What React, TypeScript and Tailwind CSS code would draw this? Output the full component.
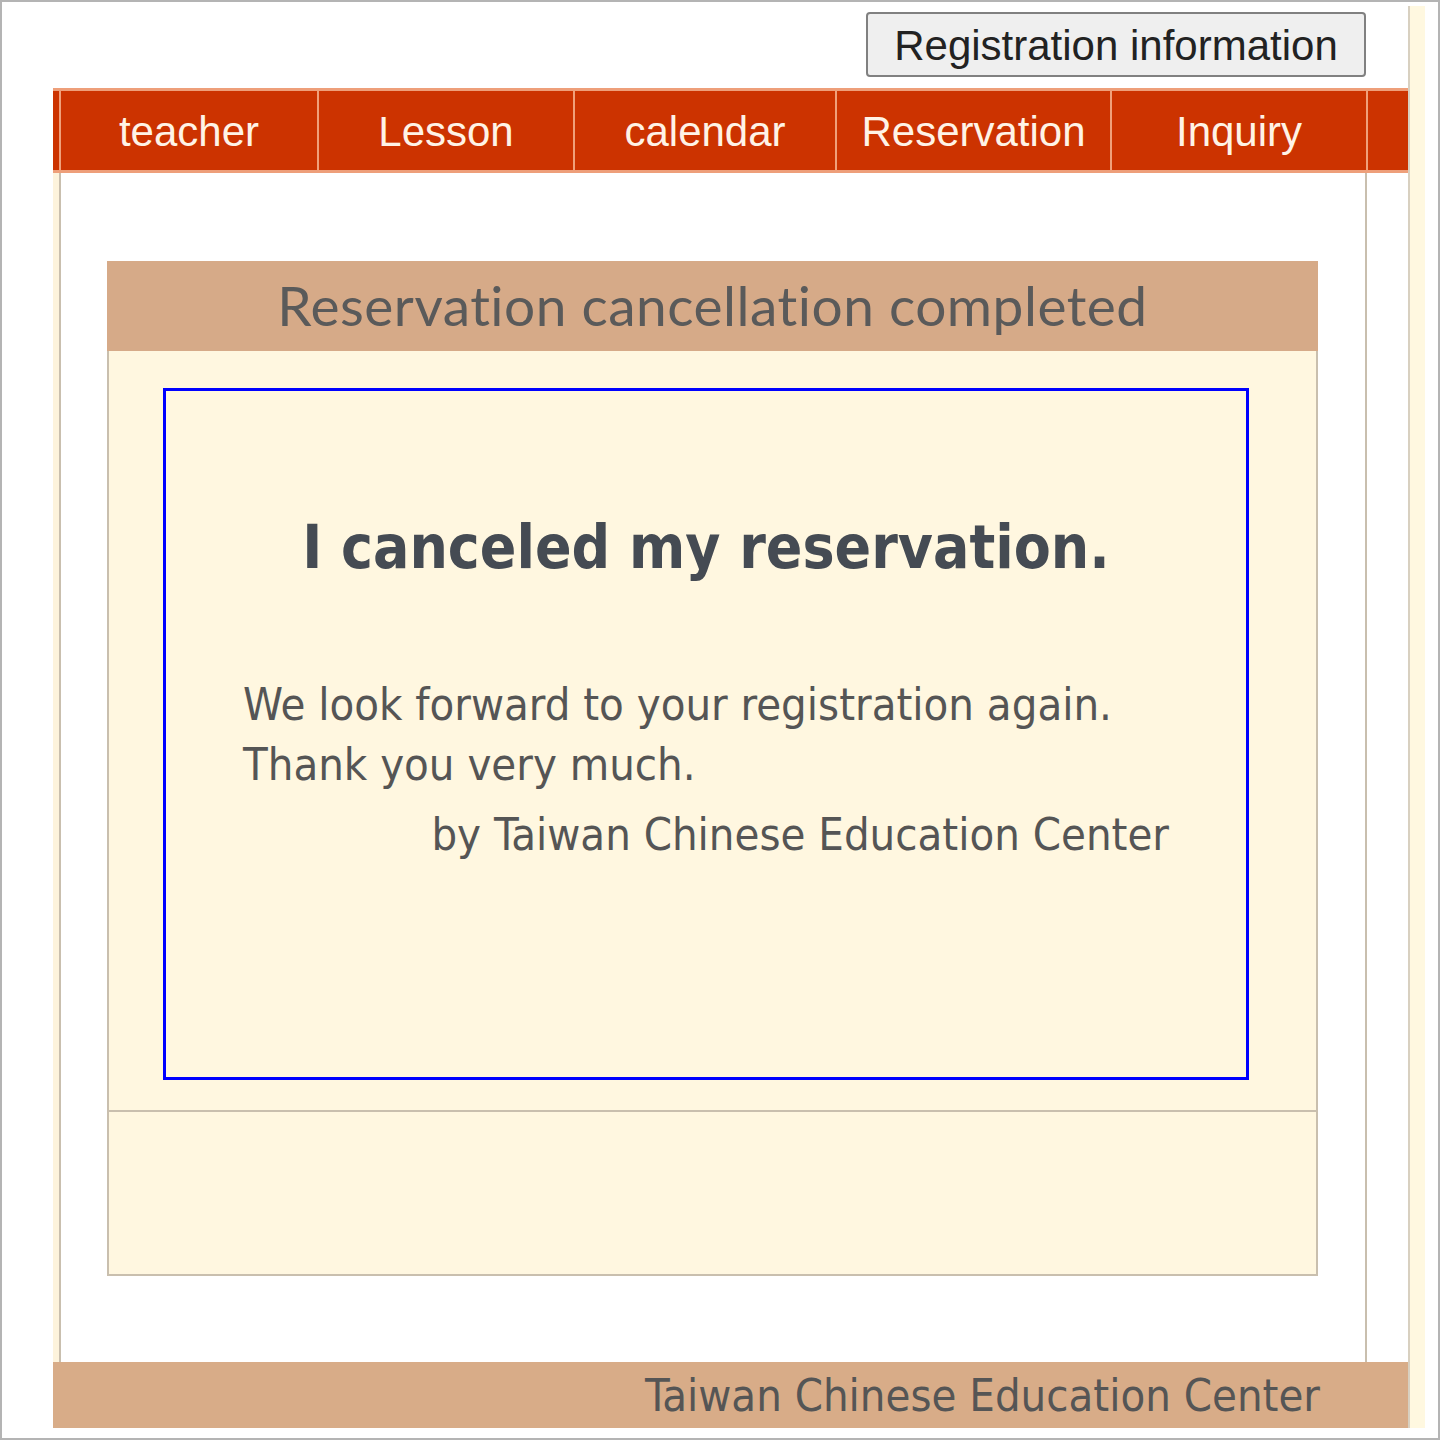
import React from "react";

const navItems = [
  { label: "teacher", w: "w-[258px]" },
  { label: "Lesson", w: "w-[256px]" },
  { label: "calendar", w: "w-[262px]" },
  { label: "Reservation", w: "w-[275px]" },
  { label: "Inquiry", w: "w-[256px]" },
];

export default function App() {
  return (
    <div className="w-[1440px] h-[1440px] box-border border-2 border-[#b4b4b4] bg-white flex overflow-hidden">
      <div className="w-[51px] shrink-0" />
      <div className="w-[1355px] shrink-0 flex flex-col">
        {/* top */}
        <div className="h-[86px] shrink-0 flex justify-end items-start pt-[10px] pr-[42px]">
          <button className="w-[500px] h-[65px] rounded-[4px] border-2 border-[#808080] bg-[#efefef] text-[#222] text-[42px] leading-none font-['Liberation_Sans',Arial,sans-serif] flex items-center justify-center pt-[3px]">
            Registration information
          </button>
        </div>
        {/* nav */}
        <div className="h-[85px] shrink-0 bg-[#cc3300] border-t-[3px] border-b-[3px] border-[#ee9f7a] flex font-['Liberation_Sans',Arial,sans-serif] text-[42px] text-[#fff3e6]">
          <div className="w-[6px] shrink-0" />
          {navItems.map((n) => (
            <div
              key={n.label}
              className={`${n.w} shrink-0 border-l-2 border-[#f0a07a] flex items-center justify-center leading-none pt-[3px]`}
            >
              {n.label}
            </div>
          ))}
          <div className="w-[2px] shrink-0 bg-[#f0a07a]" />
          <div className="flex-1" />
        </div>
        {/* content */}
        <div className="flex-1 flex">
          <div className="w-[6px] shrink-0 bg-[#fdf3dc]" />
          <div className="w-[2px] shrink-0 bg-[#c9bfae]" />
          <div className="w-[1304px] shrink-0 bg-white pt-[88px] pl-[46px]">
            <div className="w-[1211px]">
              <div className="h-[90px] bg-[#d6aa88] flex items-center justify-center text-[55px] text-[#5a5a5a] font-['Lato','Open_Sans',sans-serif] leading-none tracking-[0.5px] pb-[2px]">
                Reservation cancellation completed
              </div>
              <div className="border-x-2 border-b-2 border-[#c9bfae] bg-[#fff7e0]">
                <div className="pt-[37px] pl-[54px]">
                  <div className="w-[1086px] h-[692px] border-[3px] border-[#0000ff] font-['DejaVu_Sans_Condensed','DejaVu_Sans',Tahoma,sans-serif] font-stretch-condensed text-[#50555c]">
                    <div className="pt-[126px] text-center text-[60px] font-bold leading-none text-[#454b53]">
                      I canceled my reservation.
                    </div>
                    <div className="pt-[98px] px-[77px] text-[45px] leading-[60px] text-[#555]">
                      <div>We look forward to your registration again.</div>
                      <div>Thank you very much.</div>
                      <div className="text-right mt-[10px]">by Taiwan Chinese Education Center</div>
                    </div>
                  </div>
                </div>
                <div className="mt-[30px] border-t-2 border-[#c9bfae] h-[164px]" />
              </div>
            </div>
          </div>
          <div className="w-[2px] shrink-0 bg-[#c9bfae]" />
          <div className="flex-1 bg-white" />
        </div>
        {/* footer */}
        <div className="h-[66px] shrink-0 bg-[#d8ac88] flex items-center justify-end pr-[88px] text-[45px] text-[#555] leading-none font-['DejaVu_Sans_Condensed','DejaVu_Sans',Tahoma,sans-serif] font-stretch-condensed">
          Taiwan Chinese Education Center
        </div>
        <div className="h-[10px] shrink-0" />
      </div>
      <div className="w-[17px] shrink-0 mt-[4px] mb-[10px] bg-[#fff8e0] border-l-2 border-[#d8d0c0]" />
      <div className="flex-1" />
    </div>
  );
}
